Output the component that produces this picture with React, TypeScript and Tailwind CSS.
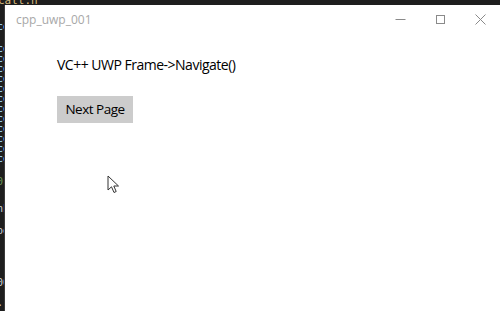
import React from "react";

const codeLines: { top: number; text: string; color: string }[] = [
  { top: 22, text: "ce", color: "#9cdcfe" },
  { top: 44, text: "ce", color: "#9cdcfe" },
  { top: 54, text: "ce", color: "#9cdcfe" },
  { top: 64, text: "ce", color: "#9cdcfe" },
  { top: 74, text: "ce", color: "#9cdcfe" },
  { top: 84, text: "ce", color: "#9cdcfe" },
  { top: 94, text: "ce", color: "#9cdcfe" },
  { top: 104, text: "ce", color: "#9cdcfe" },
  { top: 114, text: "ce", color: "#9cdcfe" },
  { top: 124, text: "ce", color: "#9cdcfe" },
  { top: 134, text: "ce", color: "#9cdcfe" },
  { top: 144, text: "ce", color: "#9cdcfe" },
  { top: 154, text: "ce", color: "#9cdcfe" },
  { top: 177, text: "0)", color: "#6a9955" },
  { top: 204, text: "nF", color: "#d4d4d4" },
  { top: 226, text: "oe", color: "#d4d4d4" },
  { top: 278, text: "00", color: "#d4d4d4" },
  { top: 298, text: "..", color: "#d4d4d4" },
];

export default function App() {
  return (
    <div
      className="w-[500px] h-[311px] bg-[#1e1e1e] flex flex-col overflow-hidden relative"
      style={{ fontFamily: '"Open Sans", "Noto Sans", sans-serif' }}
    >
      {/* top strip of the editor behind */}
      <div className="h-[5px] overflow-hidden flex items-end shrink-0">
        <span
          className="text-[11px] leading-[11px] text-[#d7ba7d] -mb-[1px] -ml-[2px]"
          style={{ fontFamily: '"DejaVu Sans Mono", monospace' }}
        >
          call.h
        </span>
      </div>
      <div className="flex flex-1 min-h-0">
        {/* left strip */}
        <div
          className="w-[5px] shrink-0 relative overflow-hidden border-r border-[#3a3a3a]"
          style={{ fontFamily: '"DejaVu Sans Mono", monospace' }}
        >
          {codeLines.map((l, i) => (
            <span
              key={i}
              className="absolute left-[-3px] text-[10px] leading-[10px]"
              style={{ top: l.top - 5, color: l.color }}
            >
              {l.text}
            </span>
          ))}
        </div>
        {/* app window */}
        <div className="flex-1 bg-white flex flex-col">
          <div className="h-[29px] flex items-center shrink-0">
            <span className="pl-[11px] text-[12px] text-[#a8a8a8] flex-1">cpp_uwp_001</span>
            <div className="flex h-full">
              <div className="w-[40px] h-full flex items-center justify-center">
                <svg width="11" height="11" viewBox="0 0 11 11">
                  <path d="M0.5 5.5H10.5" stroke="#8a8a8a" strokeWidth="1" />
                </svg>
              </div>
              <div className="w-[40px] h-full flex items-center justify-center">
                <svg width="11" height="11" viewBox="0 0 11 11">
                  <rect x="1.5" y="1.5" width="8" height="8" fill="none" stroke="#8a8a8a" strokeWidth="1" />
                </svg>
              </div>
              <div className="w-[40px] h-full flex items-center justify-center">
                <svg width="11" height="11" viewBox="0 0 11 11">
                  <path d="M0.5 0.5L10.5 10.5M10.5 0.5L0.5 10.5" stroke="#8a8a8a" strokeWidth="1" />
                </svg>
              </div>
            </div>
          </div>
          <div className="pl-[52px] pt-[21px] flex flex-col items-start">
            <div className="text-[14px] leading-[20px] tracking-[-0.5px] text-black">
              VC++ UWP Frame-&gt;Navigate()
            </div>
            <button className="mt-[21px] w-[76px] h-[27px] bg-[#cccccc] text-[13.5px] tracking-[-0.5px] text-black flex items-center justify-center">
              Next Page
            </button>
          </div>
        </div>
      </div>
      {/* mouse cursor */}
      <svg
        className="absolute left-[107px] top-[175px]"
        width="14"
        height="20"
        viewBox="0 0 14 20"
      >
        <path
          d="M1 1V15L4.5 11.8L7 17.5L9.2 16.5L6.8 11H11.5Z"
          fill="white"
          stroke="#333"
          strokeWidth="1"
          strokeLinejoin="round"
        />
      </svg>
    </div>
  );
}
